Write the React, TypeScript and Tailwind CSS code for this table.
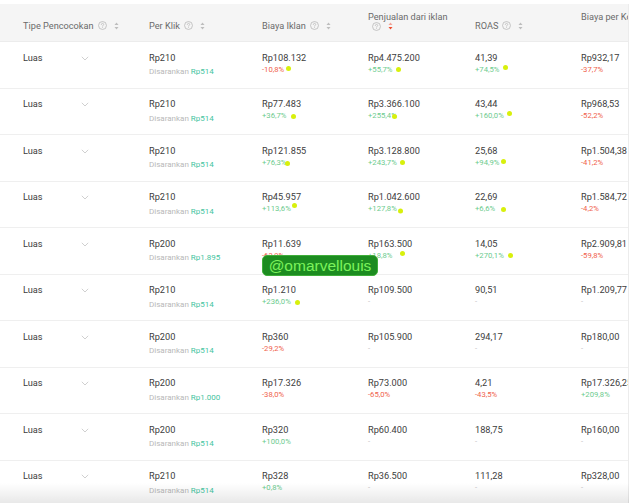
import React from "react";

type Metric = {
  value: string;
  delta?: string;
  dot?: string;
};

type Row = {
  tipe: string;
  klik: string;
  saran: string;
  biaya: Metric;
  jual: Metric;
  roas: Metric;
  bpk: Metric;
};

const rows: Row[] = [
  {
    tipe: "Luas",
    klik: "Rp210",
    saran: "Rp514",
    biaya: { value: "Rp108.132", delta: "-10,8%", dot: "ml-[2px] -translate-y-[1px]" },
    jual: { value: "Rp4.475.200", delta: "+55,7%", dot: "ml-[3.5px]" },
    roas: { value: "41,39", delta: "+74,5%", dot: "ml-[3.5px] -translate-y-[2px]" },
    bpk: { value: "Rp932,17", delta: "-37,7%" },
  },
  {
    tipe: "Luas",
    klik: "Rp210",
    saran: "Rp514",
    biaya: { value: "Rp77.483", delta: "+36,7%", dot: "ml-[4.5px]" },
    jual: { value: "Rp3.366.100", delta: "+255,4%", dot: "-ml-[5px]" },
    roas: { value: "43,44", delta: "+160,0%", dot: "ml-[3.5px] -translate-y-[3px]" },
    bpk: { value: "Rp968,53", delta: "-52,2%" },
  },
  {
    tipe: "Luas",
    klik: "Rp210",
    saran: "Rp514",
    biaya: { value: "Rp121.855", delta: "+76,3%", dot: "-ml-[1.5px] translate-y-[1px]" },
    jual: { value: "Rp3.128.800", delta: "+243,7%", dot: "ml-[3.5px]" },
    roas: { value: "25,68", delta: "+94,9%", dot: "ml-[1.5px] -translate-y-[1px]" },
    bpk: { value: "Rp1.504,38", delta: "-41,2%" },
  },
  {
    tipe: "Luas",
    klik: "Rp210",
    saran: "Rp514",
    biaya: { value: "Rp45.957", delta: "+113,6%", dot: "ml-[1.5px] -translate-y-[4px]" },
    jual: { value: "Rp1.042.600", delta: "+127,8%", dot: "ml-[1px] translate-y-[1.5px]" },
    roas: { value: "22,69", delta: "+6,6%", dot: "ml-[5.5px]" },
    bpk: { value: "Rp1.584,72", delta: "-4,2%" },
  },
  {
    tipe: "Luas",
    klik: "Rp200",
    saran: "Rp1.895",
    biaya: { value: "Rp11.639", delta: "-63,9%" },
    jual: { value: "Rp163.500", delta: "+18,8%", dot: "ml-[8px] -translate-y-[2px]" },
    roas: { value: "14,05", delta: "+270,1%", dot: "ml-[4.5px]" },
    bpk: { value: "Rp2.909,81", delta: "-59,8%" },
  },
  {
    tipe: "Luas",
    klik: "Rp210",
    saran: "Rp514",
    biaya: { value: "Rp1.210", delta: "+236,0%", dot: "ml-[4.5px]" },
    jual: { value: "Rp109.500" },
    roas: { value: "90,51" },
    bpk: { value: "Rp1.209,77" },
  },
  {
    tipe: "Luas",
    klik: "Rp200",
    saran: "Rp514",
    biaya: { value: "Rp360", delta: "-29,2%" },
    jual: { value: "Rp105.900" },
    roas: { value: "294,17" },
    bpk: { value: "Rp180,00" },
  },
  {
    tipe: "Luas",
    klik: "Rp200",
    saran: "Rp1.000",
    biaya: { value: "Rp17.326", delta: "-38,0%" },
    jual: { value: "Rp73.000", delta: "-65,0%" },
    roas: { value: "4,21", delta: "-43,5%" },
    bpk: { value: "Rp17.326,25", delta: "+209,8%" },
  },
  {
    tipe: "Luas",
    klik: "Rp200",
    saran: "Rp514",
    biaya: { value: "Rp320", delta: "+100,0%" },
    jual: { value: "Rp60.400" },
    roas: { value: "188,75" },
    bpk: { value: "Rp160,00" },
  },
  {
    tipe: "Luas",
    klik: "Rp210",
    saran: "Rp514",
    biaya: { value: "Rp328", delta: "+0,8%" },
    jual: { value: "Rp36.500" },
    roas: { value: "111,28" },
    bpk: { value: "Rp328,00" },
  },
];

const cols = "grid grid-cols-[149px_113px_106px_107px_106px_120px]";

function InfoIcon() {
  return (
    <svg width="9" height="9" viewBox="0 0 10 10" className="shrink-0">
      <circle cx="5" cy="5" r="4.4" fill="none" stroke="#b3b3b3" strokeWidth="0.8" />
      <path
        d="M3.7 3.9c0-.8.6-1.3 1.3-1.3s1.3.5 1.3 1.2c0 .9-1.2 1-1.2 1.9"
        fill="none"
        stroke="#b3b3b3"
        strokeWidth="0.8"
        strokeLinecap="round"
      />
      <circle cx="5.1" cy="7.2" r="0.5" fill="#b3b3b3" />
    </svg>
  );
}

function SortIcon({ active = false }: { active?: boolean }) {
  return (
    <svg width="5" height="8" viewBox="0 0 5 8" className="shrink-0">
      <path d="M2.5 0.6L4.5 3H0.5z" fill={active ? "#f2a296" : "#bdbdbd"} />
      <path d="M2.5 7.4L4.5 5H0.5z" fill={active ? "#ee4d2d" : "#bdbdbd"} />
    </svg>
  );
}

function Chevron() {
  return (
    <svg width="8" height="5" viewBox="0 0 8 5" className="shrink-0">
      <path d="M0.8 0.8L4 4L7.2 0.8" fill="none" stroke="#c4c4c4" strokeWidth="0.8" />
    </svg>
  );
}

function HeadCell({ label, first = false }: { label: string; first?: boolean }) {
  return (
    <div className={`flex items-center gap-[4px] whitespace-nowrap ${first ? "pl-[23px]" : ""}`}>
      <span>{label}</span>
      <InfoIcon />
      <span className="ml-[3px] flex">
        <SortIcon />
      </span>
    </div>
  );
}

function MetricCell({ m }: { m: Metric }) {
  const up = m.delta?.startsWith("+");
  return (
    <div className="whitespace-nowrap">
      <div className="text-[9.2px] leading-[12px] text-[#3d3d3d]">{m.value}</div>
      <div className="flex items-center text-[7.7px] leading-[12px]">
        {m.delta ? (
          <span className={up ? "text-[#6ccb8e]" : "text-[#f0624c]"}>{m.delta}</span>
        ) : (
          <span className="text-[#c4c4c4]">-</span>
        )}
        {m.dot && (
          <span className={`inline-block h-[5px] w-[5px] rounded-full bg-[#d8f00c] ${m.dot}`} />
        )}
      </div>
    </div>
  );
}

export default function App() {
  return (
    <div className="relative h-[503px] w-[640px] overflow-hidden bg-white pt-[4px] font-['Roboto',sans-serif]">
      <div className="w-[629px] overflow-hidden border-r border-[#ececec]">
        <div className={`${cols} h-[38px] border-b border-[#ececec] bg-[#f5f5f5] pt-[6.5px] text-[9.2px] leading-[12px] text-[#6b6b6b]`}>
          <HeadCell label="Tipe Pencocokan" first />
          <HeadCell label="Per Klik" />
          <HeadCell label="Biaya Iklan" />
          <div className="whitespace-nowrap">
            <div>Penjualan dari iklan</div>
            <div className="mt-[-1px] flex items-center gap-[4px] pl-[4px]">
              <InfoIcon />
              <span className="ml-[3px] flex">
                <SortIcon active />
              </span>
            </div>
          </div>
          <HeadCell label="ROAS" />
          <div className="whitespace-nowrap">Biaya per Konversi</div>
        </div>

        {rows.map((r, i) => (
          <div key={i} className={`${cols} h-[46.5px] border-b border-[#efefef] pt-[9.5px]`}>
            <div className="flex items-start pl-[23px]">
              <span className="w-[58px] text-[9.2px] leading-[12px] text-[#3d3d3d]">{r.tipe}</span>
              <span className="mt-[4px] flex">
                <Chevron />
              </span>
            </div>
            <div className="whitespace-nowrap">
              <div className="text-[9.2px] leading-[12px] text-[#3d3d3d]">{r.klik}</div>
              <div className="mt-[2.5px] text-[8px] leading-[12px] text-[#b8b8b8]">
                Disarankan <span className="text-[#45c4a0]">{r.saran}</span>
              </div>
            </div>
            <MetricCell m={r.biaya} />
            <MetricCell m={r.jual} />
            <MetricCell m={r.roas} />
            <MetricCell m={r.bpk} />
          </div>
        ))}
      </div>

      <div className="absolute left-[262px] top-[255px] flex h-[21px] w-[116px] items-center justify-center rounded-[5px] border border-[#3fae3a] bg-[#1c8c20] font-['Liberation_Sans',sans-serif] text-[15.5px] leading-none text-[#7df25c]">
        @omarvellouis
      </div>

      <div className="pointer-events-none absolute bottom-0 left-0 h-[20px] w-[629px] bg-linear-to-b from-transparent to-[rgba(0,0,0,0.09)]" />
    </div>
  );
}
